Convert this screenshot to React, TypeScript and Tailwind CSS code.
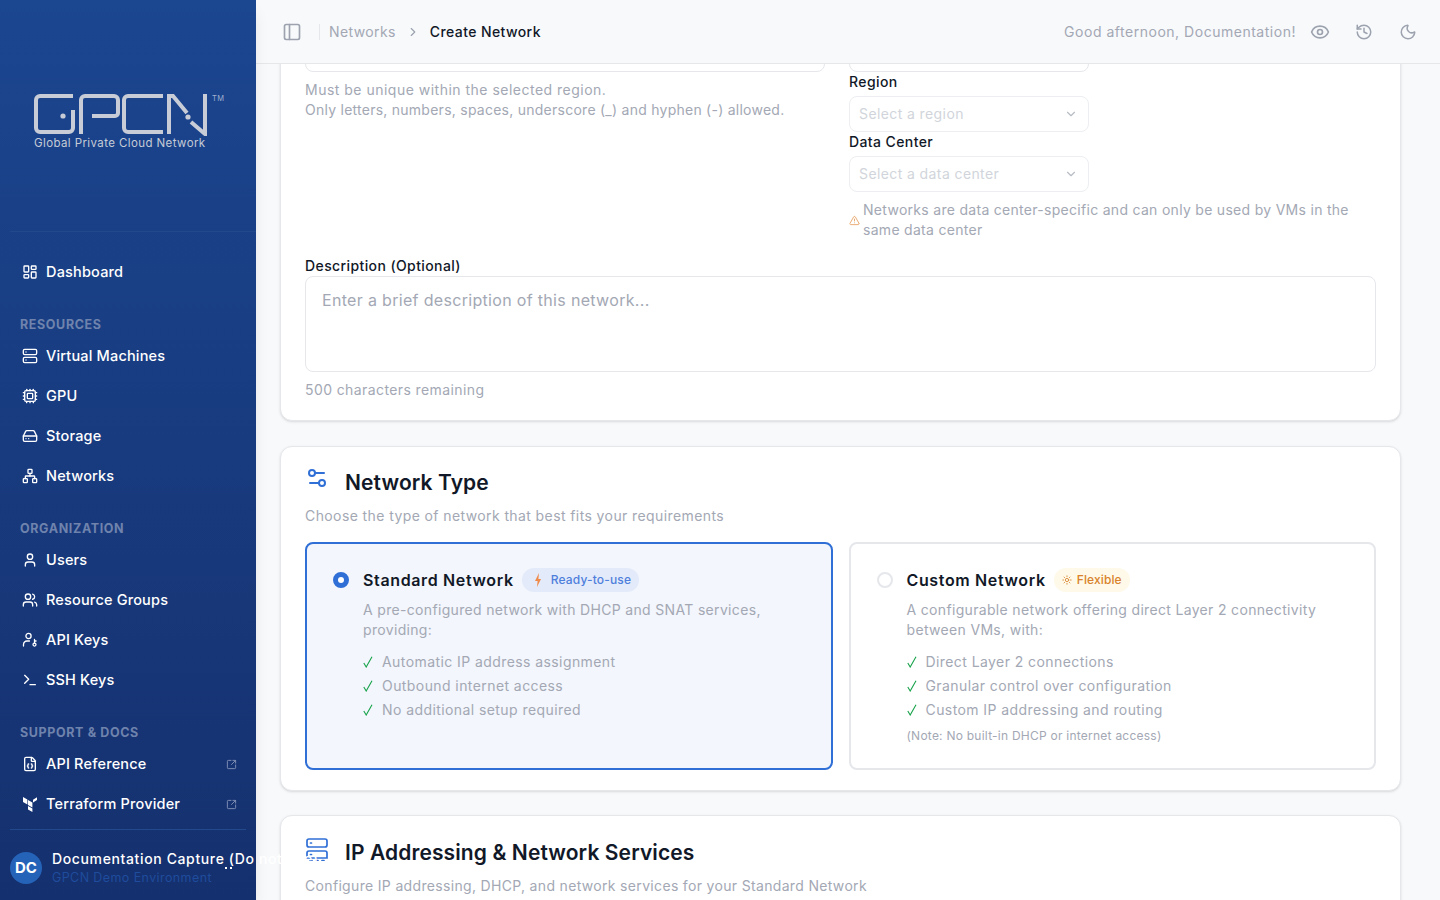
import React from 'react'
import {
  ChevronDown,
  ChevronRight,
  Cpu,
  Eye,
  FileJson,
  HardDrive,
  History,
  LayoutDashboard,
  Moon,
  Network,
  PanelLeft,
  Server,
  Settings2,
  SquareArrowOutUpRight,
  Sun,
  Terminal,
  TriangleAlert,
  User,
  Users,
} from 'lucide-react'

const Logo = () => (
  <svg width="190" height="44" viewBox="0 0 190 44" fill="none" stroke="#c8ccd6" strokeWidth="4">
    <path d="M39 4H6a4 4 0 0 0-4 4v28a4 4 0 0 0 4 4h29a4 4 0 0 0 4-4V18" />
    <circle cx="29" cy="24" r="2.6" fill="#c8ccd6" stroke="none" />
    <path d="M47 42V8a4 4 0 0 1 4-4h29a4 4 0 0 1 4 4v13a3 3 0 0 1-3 3H58" />
    <path d="M129 4H94a4 4 0 0 0-4 4v28a4 4 0 0 0 4 4h35" />
    <path d="M135 42V4h4l14 17" />
    <circle cx="154" cy="25" r="2.6" fill="#c8ccd6" stroke="none" />
    <path d="M157 30l14 12V2" />
  </svg>
)

const ApiKeyIcon = () => (
  <svg width="16" height="16" viewBox="0 0 16 16" fill="none" stroke="currentColor" strokeWidth="1.3" strokeLinecap="round">
    <circle cx="6.5" cy="4" r="2.6" />
    <path d="M1.5 14v-1.5a3.5 3.5 0 0 1 3.5-3.5h2.5" />
    <circle cx="12.5" cy="12.6" r="1.5" />
    <path d="M12.5 11V7.5M12.5 9h1.6" />
  </svg>
)

const TerraformIcon = () => (
  <svg width="16" height="16" viewBox="0 0 16 16" fill="currentColor">
    <path d="M1 1l4.4 2.5v5L1 6zM6 4l4.4 2.5v5L6 9zM11 6.4L15 4V1.3l-4 2.4zM6 10l4.4 2.6V16L6 13.4z" />
  </svg>
)

const ServicesIcon = () => (
  <svg width="24" height="24" viewBox="0 0 24 24" fill="none" stroke="#2f6fd6" strokeWidth="1.7" strokeLinecap="round" className="-mt-2">
    <rect x="2" y="2" width="20" height="8" rx="2" />
    <path d="M2 21v-5a2 2 0 0 1 2-2h16a2 2 0 0 1 2 2v5H2" />
    <path d="M5.5 6h1M5.5 17.5h1M5 23.5h2M11 23.5h2M17 23.5h2" />
  </svg>
)

const BoltIcon = () => (
  <svg width="12" height="14" viewBox="0 0 12 14" fill="#f08a4b">
    <path d="M7 0L3 8h2.6L5 14l4-8H6.4z" />
  </svg>
)

const CheckIcon = () => (
  <svg width="11" height="12" viewBox="0 0 11 12" fill="none" stroke="#16a34a" strokeWidth="1.1">
    <path d="M0.8 7L3.2 11L9 0.8" />
  </svg>
)

const NavItem = ({ icon, label, external }: any) => (
  <a className="flex h-10 items-center gap-2 px-3 text-[14.5px] font-medium tracking-[0.012em] text-white">
    <span className="flex w-4 justify-center">{icon}</span>
    <span className="flex-1">{label}</span>
    {external && <SquareArrowOutUpRight size={11} className="-mr-[3px] text-[#8494b8]" />}
  </a>
)

const SectionLabel = ({ children }: any) => (
  <p className="mt-6 mb-1 h-4 px-[10px] text-[12.5px] leading-[18px] font-bold tracking-[0.05em] text-[#6f83ad]">{children}</p>
)

const Sidebar = () => (
  <aside className="relative z-20 flex h-screen w-64 shrink-0 flex-col bg-gradient-to-b from-[#1b4690] to-[#15306e] shadow-lg">
    <div className="relative ml-[10px] h-[232px] shrink-0 border-b border-[#24488c] pt-[92px] pl-6">
      <Logo />
      <p className="-mt-px text-[11.5px] whitespace-nowrap text-[#c5cbd6]">Global Private Cloud Network</p>
      <span className="absolute top-[93px] left-[202px] text-[7.5px] text-[#9fb0cf]">TM</span>
    </div>
    <nav className="flex-1 px-[10px] pt-5">
      <NavItem icon={<LayoutDashboard size={16} />} label="Dashboard" />
      <SectionLabel>RESOURCES</SectionLabel>
      <NavItem icon={<Server size={16} />} label="Virtual Machines" />
      <NavItem icon={<Cpu size={16} />} label="GPU" />
      <NavItem icon={<HardDrive size={16} />} label="Storage" />
      <NavItem icon={<Network size={16} />} label="Networks" />
      <SectionLabel>ORGANIZATION</SectionLabel>
      <NavItem icon={<User size={16} />} label="Users" />
      <NavItem icon={<Users size={16} />} label="Resource Groups" />
      <NavItem icon={<ApiKeyIcon />} label="API Keys" />
      <NavItem icon={<Terminal size={16} />} label="SSH Keys" />
      <SectionLabel>SUPPORT &amp; DOCS</SectionLabel>
      <NavItem icon={<FileJson size={16} />} label="API Reference" external />
      <NavItem icon={<TerraformIcon />} label="Terraform Provider" external />
    </nav>
    <div className="mx-[10px] flex h-[71px] shrink-0 items-center gap-[10px] border-t border-[#24488c] pt-[6px]">
      <div className="flex h-8 w-8 shrink-0 items-center justify-center rounded-full bg-[#2563b8] text-[15px] font-bold tracking-normal text-white">
        DC
      </div>
      <div className="relative w-[200px]">
        <p className="text-[14px] leading-5 font-medium tracking-[0.045em] whitespace-nowrap text-white">Documentation Capture (Do not use)</p>
        <p className="text-[12.5px] leading-[18px] whitespace-nowrap text-[#1f4c9c]">GPCN Demo Environment</p>
        <span className="absolute top-[18px] left-[173px] h-[2px] w-[2px] bg-white" />
        <span className="absolute top-[18px] left-[178px] h-[2px] w-[2px] bg-white" />
      </div>
    </div>
  </aside>
)

const Header = () => (
  <header className="relative z-10 flex h-16 shrink-0 items-center border-b border-[#e5e7eb] bg-[#f8f9fb] pr-[23px] pl-[26px]">
    <PanelLeft size={20} className="text-[#9ca3af]" />
    <div className="mr-[9px] ml-[17px] h-4 w-px bg-[#e5e7eb]" />
    <span className="text-sm text-[#a3a8b4]">Networks</span>
    <ChevronRight size={14} className="mx-[10px] text-[#9ca3af]" />
    <span className="text-sm font-medium text-[#111827]">Create Network</span>
    <span className="ml-auto text-sm tracking-[0.037em] text-[#a3a8b4]">Good afternoon, Documentation!</span>
    <Eye size={20} className="ml-[14px] text-[#9ca3af]" />
    <History size={18} className="ml-[25px] text-[#9ca3af]" />
    <Moon size={18} className="ml-[26px] text-[#9ca3af]" />
  </header>
)

const Select = ({ placeholder }: any) => (
  <div className="flex h-9 w-60 items-center justify-between rounded-lg border border-[#eceef1] pr-[10px] pl-[9px] text-sm text-[#d1d5db]">
    {placeholder}
    <ChevronDown size={14} className="text-[#b8bcc5]" />
  </div>
)

const Feature = ({ children }: any) => (
  <li className="flex h-6 items-center gap-2 text-sm tracking-[0.03em] text-[#a3a8b4]">
    <CheckIcon />
    {children}
  </li>
)

const FormCard = () => (
  <section className="rounded-xl border border-[#e5e7eb] bg-white px-6 pt-0 pb-5 shadow-sm">
    <div className="flex gap-6">
      <div className="w-[520px]">
        <div className="h-[71px] rounded-lg border border-[#e5e7eb]" />
        <p className="mt-2 text-sm leading-5 tracking-[0.035em] text-[#a3a8b4]">Must be unique within the selected region.</p>
        <p className="text-sm leading-5 tracking-[0.018em] text-[#a3a8b4]">Only letters, numbers, spaces, underscore (_) and hyphen (-) allowed.</p>
      </div>
      <div className="flex-1">
        <div className="h-[71px] w-60 rounded-lg border border-[#e5e7eb]" />
        <p className="h-6 text-sm leading-5 font-medium text-[#111827]">Region</p>
        <Select placeholder="Select a region" />
        <p className="h-6 text-sm leading-5 font-medium text-[#111827]">Data Center</p>
        <Select placeholder="Select a data center" />
        <div className="mt-2 flex items-center gap-[3px] text-sm leading-5 tracking-[0.021em] text-[#a3a8b4]">
          <TriangleAlert size={11} className="shrink-0 text-[#e8a468]" />
          <p>Networks are data center-specific and can only be used by VMs in the same data center</p>
        </div>
      </div>
    </div>
    <p className="mt-4 h-5 text-sm leading-5 font-medium text-[#111827]">Description (Optional)</p>
    <div className="h-24 rounded-lg border border-[#e5e7eb] px-4 pt-[11px] text-base leading-6 tracking-[0.02em] text-[#a3a8b4]">
      Enter a brief description of this network...
    </div>
    <p className="mt-2 text-sm leading-5 text-[#a3a8b4]">500 characters remaining</p>
  </section>
)

const NetworkTypeCard = () => (
  <section className="mt-[25px] rounded-xl border border-[#e5e7eb] bg-white px-6 pt-5 pb-5 shadow-sm">
    <div className="flex items-center gap-4">
      <Settings2 size={24} className="-mt-[10px] text-[#2f6fd6]" />
      <h2 className="text-[21px] leading-8 font-semibold tracking-[0.005em] text-[#111827]">Network Type</h2>
    </div>
    <p className="mt-[7px] text-sm leading-5 text-[#a3a8b4]">Choose the type of network that best fits your requirements</p>
    <div className="mt-4 grid grid-cols-2 gap-4">
      <div className="h-[228px] rounded-lg border-2 border-[#2f6fd6] bg-[#f3f6fc] pt-6 pl-[26px]">
        <div className="flex gap-[14px]">
          <span className="mt-1 h-4 w-4 shrink-0 rounded-full border-[5px] border-[#2f6fd6] bg-white" />
          <div>
            <div className="flex h-6 items-center gap-2">
              <span className="text-base font-semibold tracking-[0.04em] text-[#111827]">Standard Network</span>
              <span className="flex h-6 items-center gap-[7px] rounded-full bg-[#e3eafa] pr-2 pl-[10px] text-xs font-medium tracking-[0.0125em] text-[#4f7fdc]">
                <BoltIcon />
                Ready-to-use
              </span>
            </div>
            <p className="mt-2 w-[420px] text-sm leading-5 tracking-[0.0235em] text-[#a3a8b4]">
              A pre-configured network with DHCP and SNAT services, providing:
            </p>
            <ul className="mt-[10px]">
              <Feature>Automatic IP address assignment</Feature>
              <Feature>Outbound internet access</Feature>
              <Feature>No additional setup required</Feature>
            </ul>
          </div>
        </div>
      </div>
      <div className="h-[228px] rounded-lg border-2 border-[#e5e7eb] bg-white pt-6 pl-[26px]">
        <div className="flex gap-[14px]">
          <span className="mt-1 h-4 w-4 shrink-0 rounded-full border-2 border-[#e5e7eb] bg-white" />
          <div>
            <div className="flex h-6 items-center gap-2">
              <span className="text-base font-semibold tracking-[0.04em] text-[#111827]">Custom Network</span>
              <span className="flex h-6 items-center gap-[5px] rounded-full bg-[#fef9e8] px-2 text-xs font-medium tracking-[0.01em] text-[#d9822b]">
                <Sun size={10} />
                Flexible
              </span>
            </div>
            <p className="mt-2 w-[420px] text-sm leading-5 tracking-[0.0235em] text-[#a3a8b4]">
              A configurable network offering direct Layer 2 connectivity between VMs, with:
            </p>
            <ul className="mt-[10px]">
              <Feature>Direct Layer 2 connections</Feature>
              <Feature>Granular control over configuration</Feature>
              <Feature>Custom IP addressing and routing</Feature>
            </ul>
            <p className="mt-[6px] text-xs leading-4 tracking-[0.02em] text-[#a3a8b4]">(Note: No built-in DHCP or internet access)</p>
          </div>
        </div>
      </div>
    </div>
  </section>
)

const ServicesCard = () => (
  <section className="mt-6 h-[200px] rounded-xl border border-[#e5e7eb] bg-white px-6 pt-[21px] shadow-sm">
    <div className="flex items-center gap-4">
      <ServicesIcon />
      <h2 className="text-[21px] leading-8 font-semibold tracking-[0.005em] text-[#111827]">IP Addressing &amp; Network Services</h2>
    </div>
    <p className="mt-[7px] text-sm leading-5 tracking-[0.0235em] text-[#a3a8b4]">Configure IP addressing, DHCP, and network services for your Standard Network</p>
  </section>
)

export default function App() {
  return (
    <div className="flex h-screen overflow-hidden bg-[#f8f9fb] font-['Inter',sans-serif] tracking-[0.025em]">
      <Sidebar />
      <main className="flex min-w-0 flex-1 flex-col">
        <Header />
        <div className="-mt-[64px] overflow-hidden pr-[39px] pl-[24px]">
          <FormCard />
          <NetworkTypeCard />
          <ServicesCard />
        </div>
      </main>
    </div>
  )
}
